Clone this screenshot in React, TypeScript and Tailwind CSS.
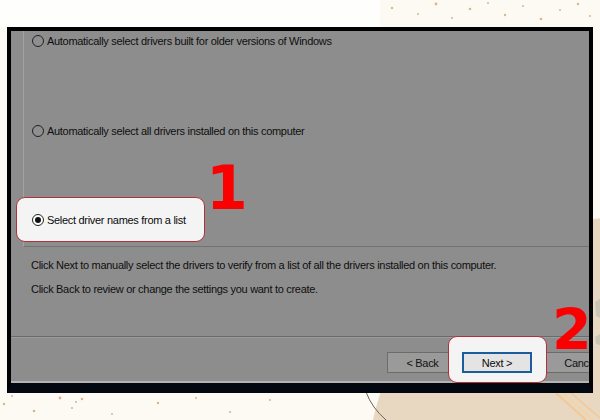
const DOTS: [number, number, number][] = [
  [392, 8, 1.2], [418, 14, 1], [436, 4, 1.4], [452, 18, 1], [470, 9, 1.3], [488, 3, 1],
  [505, 15, 1.2], [523, 6, 1], [541, 19, 1.3], [560, 10, 1], [578, 4, 1.2], [590, 16, 1],
  [4, 404, 1.2], [12, 396, 1], [34, 411, 1.3], [60, 398, 1.4], [76, 402, 1],
  [82, 399, 1.3], [72, 408, 1], [158, 403, 1.2], [112, 414, 1], [196, 398, 1],
  [230, 412, 1.1], [270, 400, 1],
];

function Radio({ checked = false }: { checked?: boolean }) {
  return (
    <span
      className={
        "flex h-[12px] w-[12px] shrink-0 items-center justify-center rounded-full border border-[#222] " +
        (checked ? "bg-white" : "bg-[#8f8f8f]")
      }
    >
      {checked && <span className="h-[6px] w-[6px] rounded-full bg-[#111]" />}
    </span>
  );
}

function Backdrop() {
  return (
    <svg className="absolute inset-0" width="600" height="420" viewBox="0 0 600 420">
      <rect width="600" height="420" fill="#fdfaf4" />
      <rect x="0" y="0" width="380" height="27" fill="#fefefd" />
      <circle cx="625" cy="475" r="258" fill="#e8d8c1" />
      <path d="M366 392 Q372 408 386 420" stroke="#6f6256" strokeWidth="1" fill="none" />
      <path d="M556 393 L586 420" stroke="#f3c891" strokeWidth="2" />
      <path d="M563 393 L593 420" stroke="#f6d3a4" strokeWidth="2" />
      <path d="M571 393 L600 418" stroke="#f3c891" strokeWidth="1.5" />
      <path d="M595 302 L600 299 L600 318 L596 316 Z" fill="#c9c6b6" />
      <path d="M595 337 L600 334 L600 345 L596 344 Z" fill="#c9c6b6" />
      {DOTS.map(([x, y, r], i) => (
        <circle key={i} cx={x} cy={y} r={r} fill="#d8b88c" />
      ))}
    </svg>
  );
}

export default function App() {
  return (
    <div
      className="relative h-[420px] w-[600px] overflow-hidden text-[11px] leading-[14px] tracking-[-0.3px] text-[#0f0f0f]"
      style={{ fontFamily: '"Liberation Sans", Arial, sans-serif' }}
    >
      <Backdrop />

      <div className="relative ml-[7px] mt-[27px] flex h-[366px] w-[586px] flex-col border-4 border-b-[10px] border-black border-b-[#03070f] bg-[#8d8d8d]">
        {/* option group */}
        <div className="ml-[12px] flex h-[216px] flex-col border-b border-l border-b-[#737373] border-l-[#a2a2a2] pl-[8px] pt-[3px]">
          <label className="flex h-[14px] items-center gap-[3px]">
            <Radio />
            <span>Automatically select drivers built for older versions of Windows</span>
          </label>
          <label className="mt-[76px] flex h-[14px] items-center gap-[3px]">
            <Radio />
            <span>Automatically select all drivers installed on this computer</span>
          </label>
          <label className="relative mt-[75px] flex h-[14px] items-center gap-[3px]">
            <span className="absolute -left-[16px] -top-[16px] h-[45px] w-[189px] rounded-[9px] border border-[#b3303b] bg-[#f4f4f4]" />
            <span className="relative">
              <Radio checked />
            </span>
            <span className="relative text-[#0a0a0a]">Select driver names from a list</span>
          </label>
        </div>

        <div className="flex flex-col gap-[10px] pl-[20px] pt-[11px]">
          <p>
            Click Next to manually select the drivers to verify from a list of all the drivers
            installed on this computer.
          </p>
          <p>Click Back to review or change the settings you want to create.</p>
        </div>

        <div className="mt-[40px] h-[2px] border-t border-b border-t-[#6a6a6a] border-b-[#9c9c9c]" />

        <div className="flex flex-1 items-start border-b-2 border-b-[#b4b4b4] pl-[376px] pt-[14px]">
          <button className="h-[21px] w-[71px] border border-[#6c6c6c] bg-[#9a9a9a] text-[#111]">
            &lt; Back
          </button>
          <div className="relative ml-[4px]">
            <span className="absolute -left-[14px] -top-[16px] h-[47px] w-[99px] rounded-[9px] border border-[#b3303b] bg-[#f4f4f4]" />
            <button className="relative h-[21px] w-[70px] border-2 border-[#1c5c9c] bg-[#e4e4e4] text-[#0a0a0a]">
              Next &gt;
            </button>
          </div>
          <div className="ml-[13px] w-[44px] overflow-hidden">
            <button className="h-[21px] w-[71px] border border-[#6c6c6c] bg-[#9a9a9a] text-[#111]">
              Cancel
            </button>
          </div>
        </div>
      </div>

      <span
        className="absolute left-[206px] top-[158px] text-[60px] font-bold leading-[60px] tracking-normal text-[#fb0000]"
        style={{ fontFamily: '"DejaVu Sans", sans-serif' }}
      >
        1
      </span>
      <span
        className="absolute left-[552px] top-[300px] text-[57px] font-bold leading-[60px] tracking-normal text-[#fb0000]"
        style={{ fontFamily: '"DejaVu Sans", sans-serif' }}
      >
        2
      </span>
    </div>
  );
}
